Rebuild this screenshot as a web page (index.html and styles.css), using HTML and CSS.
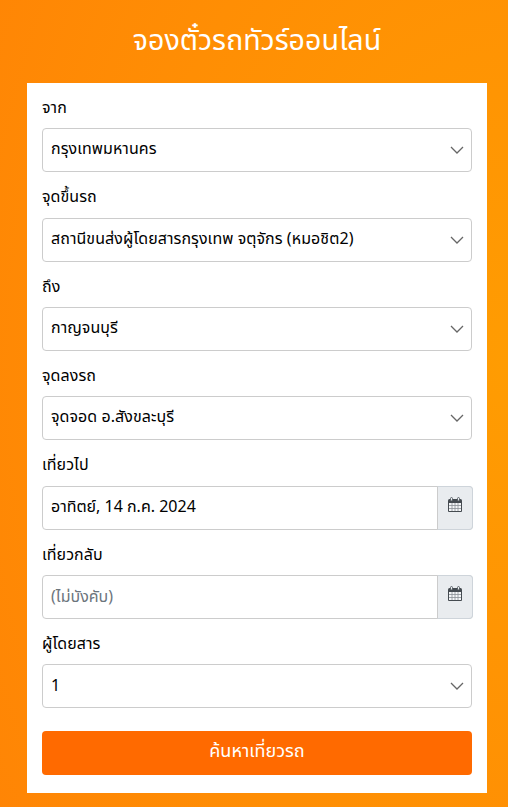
FILE: index.html
```html
<!DOCTYPE html>
<html lang="th">
<head>
    <meta charset="utf-8">
    <title>จองตั๋วรถทัวร์ออนไลน์</title>
    <link rel="stylesheet" href="styles.css">
</head>
<body>
    <svg width="0" height="0" class="defs">
        <symbol id="arrow" viewBox="0 0 14 8"><path d="M1 1l6 6 6-6"/></symbol>
        <symbol id="calendar" viewBox="0 0 14 15">
            <path class="frame" d="M.5 4V14.500H13.500V4"/>
            <path class="grid" d="M1 8.500h12M1 11.500h12M4 5v9M7 5v9M10 5v9"/>
            <path class="solid" d="M0 3.500Q0 2 1.500 2H12.500Q14 2 14 3.500V6H0z"/>
            <rect class="ring" x="2.500" y=".5" width="2" height="3.500" rx="1"/>
            <rect class="ring" x="9.500" y=".5" width="2" height="3.500" rx="1"/>
        </symbol>
    </svg>
    <h1 class="title">จองตั๋วรถทัวร์ออนไลน์</h1>
    <form class="booking">
        <div class="field">
            <label class="label">จาก</label>
            <div class="control">
                <span class="value">กรุงเทพมหานคร</span>
                <svg class="arrow"><use href="#arrow"/></svg>
            </div>
        </div>
        <div class="field">
            <label class="label">จุดขึ้นรถ</label>
            <div class="control">
                <span class="value">สถานีขนส่งผู้โดยสารกรุงเทพ จตุจักร (หมอชิต2)</span>
                <svg class="arrow"><use href="#arrow"/></svg>
            </div>
        </div>
        <div class="field">
            <label class="label">ถึง</label>
            <div class="control">
                <span class="value">กาญจนบุรี</span>
                <svg class="arrow"><use href="#arrow"/></svg>
            </div>
        </div>
        <div class="field">
            <label class="label">จุดลงรถ</label>
            <div class="control">
                <span class="value">จุดจอด อ.สังขละบุรี</span>
                <svg class="arrow"><use href="#arrow"/></svg>
            </div>
        </div>
        <div class="field">
            <label class="label">เที่ยวไป</label>
            <div class="control date">
                <span class="value day">อาทิตย์, 14 ก.ค. 2024</span>
                <span class="addon"><svg class="calendar"><use href="#calendar"/></svg></span>
            </div>
        </div>
        <div class="field">
            <label class="label">เที่ยวกลับ</label>
            <div class="control date">
                <span class="value placeholder">(ไม่บังคับ)</span>
                <span class="addon"><svg class="calendar"><use href="#calendar"/></svg></span>
            </div>
        </div>
        <div class="field">
            <label class="label">ผู้โดยสาร</label>
            <div class="control">
                <span class="value count">1</span>
                <svg class="arrow"><use href="#arrow"/></svg>
            </div>
        </div>
        <button class="search" type="button">ค้นหาเที่ยวรถ</button>
    </form>
</body>
</html>
```
FILE: styles.css
```css
* {
    box-sizing: border-box;
}

body {
    margin: 0;
    min-height: 807px;
    background: radial-gradient(620px 900px at 100% 45%, #ff9c02, #ff8e04 60%, #ff8405);
    font-family: "Noto Sans", "Noto Sans Thai", sans-serif;
    font-size: 16px;
    color: #000;
}

.defs {
    display: block;
}

.title {
    margin: 0;
    padding: 19px 0 24px 6px;
    line-height: 40px;
    text-align: center;
    color: white;
    font-size: 28.600px;
    font-weight: 400;
}

.booking {
    margin: 0 21px 0 27px;
    padding: 0 15px 18px;
    height: 710px;
    background: white;
}

.label {
    display: block;
    padding: 12px 0 9.350px;
    line-height: 24px;
    letter-spacing: 0.070px;
}

.control {
    display: flex;
    align-items: center;
    border: 1px solid #ccc;
    border-radius: 4px;
    height: 44px;
    padding: 0 7px 0 8px;
}

.value {
    flex: 1;
    padding-bottom: 4px;
    line-height: 24px;
    letter-spacing: 0.070px;
}

.day {
    letter-spacing: 0;
}

.count {
    padding-bottom: 2px;
}

.placeholder {
    padding-bottom: 3px;
    letter-spacing: 0;
    color: #6c757d;
}

.arrow {
    width: 14px;
    height: 8px;
    fill: none;
    stroke: #666;
    stroke-width: 1.300;
}

.date {
    margin-right: -1px;
    padding-right: 0;
}

.addon {
    display: flex;
    justify-content: center;
    width: 36px;
    height: 44px;
    margin-right: -1px;
    padding-top: 10px;
    background: #e9ecef;
    border: 1px solid #ced4da;
    border-left-color: #ccc;
    border-radius: 0 4px 4px 0;
}

.calendar {
    width: 14px;
    height: 15px;
}

.solid {
    fill: #454b51;
}

.frame {
    fill: #f4f6f8;
    stroke: #454b51;
}

.grid {
    fill: none;
    stroke: #8a9096;
    stroke-width: 0.800;
}

.ring {
    fill: #e9ecef;
    stroke: #495057;
    stroke-width: 0.800;
}

.search {
    display: block;
    width: 100%;
    height: 44px;
    margin-top: 22.500px;
    padding: 0 0 3px;
    border: 0;
    border-radius: 4px;
    background: #ff6a00;
    color: white;
    font-family: inherit;
    font-size: 18px;
}
```
